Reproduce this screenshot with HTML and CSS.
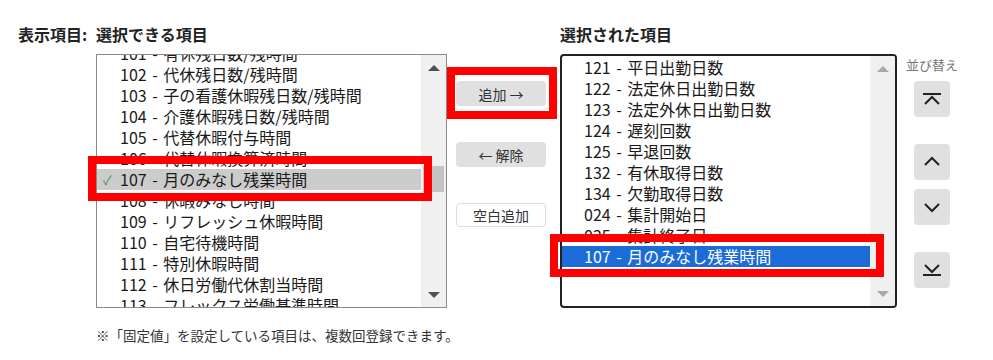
FILE: index.html
```html
<!DOCTYPE html>
<html lang="ja">
<head>
    <meta charset="UTF-8">
    <title>表示項目</title>
    <link rel="stylesheet" href="styles.css">
</head>
<body>
    <div class="editor">
        <div class="columns">
            <div class="caption">表示項目:</div>

            <div class="pane pane-left">
                <div class="pane-title">選択できる項目</div>
                <div class="listbox">
                    <div class="items items-scrolled">
                        <div class="item"><span class="check"></span>101 - 有休残日数/残時間</div>
                        <div class="item"><span class="check"></span>102 - 代休残日数/残時間</div>
                        <div class="item"><span class="check"></span>103 - 子の看護休暇残日数/残時間</div>
                        <div class="item"><span class="check"></span>104 - 介護休暇残日数/残時間</div>
                        <div class="item"><span class="check"></span>105 - 代替休暇付与時間</div>
                        <div class="item"><span class="check"></span>106 - 代替休暇換算済時間</div>
                        <div class="item item-used"><span class="check">✓</span>107 - 月のみなし残業時間</div>
                        <div class="item"><span class="check"></span>108 - 休暇みなし時間</div>
                        <div class="item"><span class="check"></span>109 - リフレッシュ休暇時間</div>
                        <div class="item"><span class="check"></span>110 - 自宅待機時間</div>
                        <div class="item"><span class="check"></span>111 - 特別休暇時間</div>
                        <div class="item"><span class="check"></span>112 - 休日労働代休割当時間</div>
                        <div class="item"><span class="check"></span>113 - フレックス労働基準時間</div>
                    </div>
                    <div class="scrollbar">
                        <span class="arrow arrow-up"></span>
                        <span class="thumb"></span>
                        <span class="arrow arrow-down"></span>
                    </div>
                </div>
            </div>

            <div class="actions">
                <button class="btn">追加 →</button>
                <button class="btn">← 解除</button>
                <button class="btn btn-plain">空白追加</button>
            </div>

            <div class="pane pane-right">
                <div class="pane-title">選択された項目</div>
                <div class="listbox listbox-active">
                    <div class="items">
                        <div class="item">121 - 平日出勤日数</div>
                        <div class="item">122 - 法定休日出勤日数</div>
                        <div class="item">123 - 法定外休日出勤日数</div>
                        <div class="item">124 - 遅刻回数</div>
                        <div class="item">125 - 早退回数</div>
                        <div class="item">132 - 有休取得日数</div>
                        <div class="item">134 - 欠勤取得日数</div>
                        <div class="item">024 - 集計開始日</div>
                        <div class="item">025 - 集計終了日</div>
                        <div class="item item-selected">107 - 月のみなし残業時間</div>
                    </div>
                    <div class="scrollbar scrollbar-idle">
                        <span class="arrow arrow-up"></span>
                        <span class="arrow arrow-down"></span>
                    </div>
                </div>
            </div>

            <div class="sort">
                <div class="sort-title">並び替え</div>
                <button class="sort-btn sort-top" title="先頭へ">
                    <svg width="22" height="14" viewBox="0 0 22 14"><path d="M2 2h18M4 12l7-7 7 7" fill="none" stroke="#222" stroke-width="2"/></svg>
                </button>
                <button class="sort-btn sort-up" title="上へ">
                    <svg width="22" height="14" viewBox="0 0 22 14"><path d="M4 10l7-7 7 7" fill="none" stroke="#222" stroke-width="2"/></svg>
                </button>
                <button class="sort-btn sort-down" title="下へ">
                    <svg width="22" height="14" viewBox="0 0 22 14"><path d="M4 4l7 7 7-7" fill="none" stroke="#222" stroke-width="2"/></svg>
                </button>
                <button class="sort-btn sort-bottom" title="末尾へ">
                    <svg width="22" height="14" viewBox="0 0 22 14"><path d="M4 2l7 7 7-7M2 12h18" fill="none" stroke="#222" stroke-width="2"/></svg>
                </button>
            </div>
        </div>

        <p class="note">※「固定値」を設定している項目は、複数回登録できます。</p>

        <!-- annotation frames -->
        <div class="callout callout-left"></div>
        <div class="callout callout-add"></div>
        <div class="callout callout-right"></div>
    </div>
</body>
</html>
```

FILE: styles.css
```css
body {
    margin: 0;
    background-color: #fff;
    color: #222;
    font-family: "Noto Sans CJK JP", "Noto Sans", sans-serif;
}

.editor {
    position: relative;
    width: 993px;
    height: 360px;
    padding: 24px 0 0 18px;
    box-sizing: border-box;
}

.columns {
    display: flex;
    align-items: flex-start;
}

.caption,
.pane-title {
    font-size: 16px;
    font-weight: bold;
    line-height: 20px;
    color: #222;
    white-space: nowrap;
}

.caption {
    width: 78px;
}

.pane-title {
    margin-bottom: 10px;
}

.pane-left {
    width: 351px;
}

.pane-right {
    width: 337px;
    margin-left: 14px;
}

.listbox {
    display: flex;
    height: 254px;
    border: 1px solid #8a8a8a;
    box-sizing: border-box;
    overflow: hidden;
    background-color: #fff;
}

.listbox-active {
    border: 2px solid #222;
    border-radius: 4px;
}

.items {
    flex: 1;
    padding-top: 1px;
    overflow: hidden;
}

.items-scrolled {
    margin-top: -13px;
}

.item {
    display: flex;
    align-items: center;
    height: 21px;
    line-height: 21px;
    padding-left: 22px;
    font-size: 16px;
    word-spacing: 2px;
    white-space: nowrap;
    color: #1a1a1a;
}

.pane-left .item {
    padding-left: 6px;
}

.check {
    width: 17px;
    color: #3a9d4f;
    font-size: 13px;
}

.item-used {
    background-color: #cccccc;
}

.item-selected {
    background-color: #1b6bd8;
    color: #fff;
}

.scrollbar {
    width: 25px;
    flex-shrink: 0;
    background-color: #f0f0f0;
    display: flex;
    flex-direction: column;
    align-items: center;
}

.arrow {
    width: 0;
    height: 0;
    border-left: 6px solid transparent;
    border-right: 6px solid transparent;
}

.arrow-up {
    margin-top: 10px;
    border-bottom: 6px solid #505050;
}

.arrow-down {
    margin-top: auto;
    margin-bottom: 9px;
    border-top: 6px solid #505050;
}

.scrollbar-idle .arrow-up {
    border-bottom-color: #a8a8a8;
}

.scrollbar-idle .arrow-down {
    border-top-color: #a8a8a8;
}

.thumb {
    width: 21px;
    height: 26px;
    margin-top: 95px;
    background-color: #c4c4c4;
}

.actions {
    width: 90px;
    margin-left: 9px;
    padding-top: 57px;
    display: flex;
    flex-direction: column;
    gap: 36px;
}

.btn {
    height: 25px;
    padding: 0;
    font-family: inherit;
    font-size: 14px;
    color: #333;
    background-color: #e0e0e0;
    border: none;
    border-radius: 4px;
}

.btn-plain {
    height: 24px;
    background-color: #fff;
    border: 1px solid #dcdcdc;
}

.sort {
    margin-left: 10px;
    width: 50px;
    padding-top: 33px;
    display: flex;
    flex-direction: column;
    align-items: center;
}

.sort-title {
    font-size: 13px;
    line-height: 16px;
    color: #777;
    white-space: nowrap;
    margin-bottom: 8px;
}

.sort-btn {
    width: 36px;
    height: 36px;
    padding: 0;
    border: none;
    border-radius: 4px;
    background-color: #e0e0e0;
    display: flex;
    align-items: center;
    justify-content: center;
}

.sort-up {
    margin-top: 27px;
}

.sort-down {
    margin-top: 9px;
}

.sort-bottom {
    margin-top: 27px;
}

.note {
    margin: 18px 0 0 78px;
    font-size: 13.5px;
    line-height: 18px;
    color: #333;
}

.callout {
    position: absolute;
    border: 8px solid #ff0000;
    box-sizing: border-box;
}

.callout-left {
    left: 88px;
    top: 156px;
    width: 344px;
    height: 45px;
}

.callout-add {
    left: 447px;
    top: 67px;
    width: 110px;
    height: 52px;
}

.callout-right {
    left: 550px;
    top: 234px;
    width: 334px;
    height: 43px;
}
```
